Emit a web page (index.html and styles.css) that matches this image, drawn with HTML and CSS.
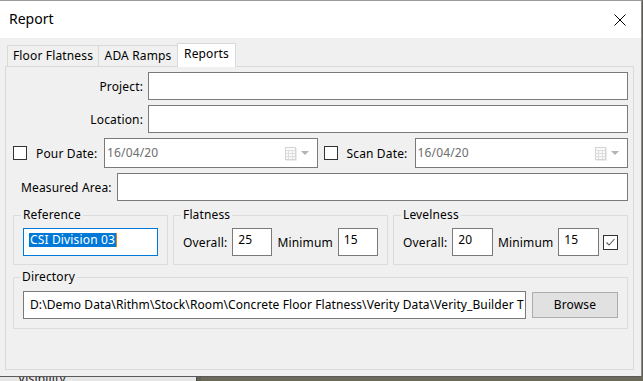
FILE: index.html
```html
<!DOCTYPE html>
<html lang="en">
<head>
    <meta charset="UTF-8">
    <meta name="viewport" content="width=device-width, initial-scale=1.0">
    <title>Report</title>
    <link rel="stylesheet" href="styles.css">
</head>
<body>
    <div class="dialog">
        <div class="titlebar">
            <span class="title">Report</span>
            <svg class="close" width="12" height="12" viewBox="0 0 12 12">
                <path d="M0.5 0.5 L11.5 11.5 M11.5 0.5 L0.5 11.5" stroke="#000" stroke-width="1" fill="none"/>
            </svg>
        </div>

        <div class="dialog-body">
            <div class="tabs">
                <div class="tab tab-flat">Floor Flatness</div>
                <div class="tab tab-ada">ADA Ramps</div>
                <div class="tab tab-reports active">Reports</div>
            </div>

            <div class="tab-page">
                <div class="row">
                    <span class="lbl lbl-right">Project:</span>
                    <div class="textbox grow"></div>
                </div>

                <div class="row">
                    <span class="lbl lbl-right">Location:</span>
                    <div class="textbox grow"></div>
                </div>

                <div class="row row-dates">
                    <div class="date-field">
                        <span class="check"></span>
                        <span class="lbl lbl-date">Pour Date:</span>
                        <div class="datebox">
                            <span class="date-text">16/04/20</span>
                            <svg class="cal" width="13" height="15" viewBox="0 0 13 15">
                                <rect x="1.5" y="1.5" width="10" height="12" fill="#fafafa" stroke="#d4d4d4"/>
                                <path d="M1.5 4.5 H11.5 M1.5 7.5 H11.5 M1.5 10.5 H11.5 M4.5 4.5 V13.5 M8.5 4.5 V13.5" stroke="#dedede" fill="none"/>
                                <path d="M12.5 2 V14.5 H2" stroke="#ececec" fill="none"/>
                            </svg>
                            <svg class="drop" width="8" height="4" viewBox="0 0 8 4">
                                <polygon points="0,0 8,0 4,4" fill="#b4b4b4"/>
                            </svg>
                        </div>
                    </div>
                    <div class="date-field">
                        <span class="check"></span>
                        <span class="lbl lbl-date">Scan Date:</span>
                        <div class="datebox">
                            <span class="date-text">16/04/20</span>
                            <svg class="cal" width="13" height="15" viewBox="0 0 13 15">
                                <rect x="1.5" y="1.5" width="10" height="12" fill="#fafafa" stroke="#d4d4d4"/>
                                <path d="M1.5 4.5 H11.5 M1.5 7.5 H11.5 M1.5 10.5 H11.5 M4.5 4.5 V13.5 M8.5 4.5 V13.5" stroke="#dedede" fill="none"/>
                                <path d="M12.5 2 V14.5 H2" stroke="#ececec" fill="none"/>
                            </svg>
                            <svg class="drop" width="8" height="4" viewBox="0 0 8 4">
                                <polygon points="0,0 8,0 4,4" fill="#b4b4b4"/>
                            </svg>
                        </div>
                    </div>
                </div>

                <div class="row row-area">
                    <span class="lbl">Measured Area:</span>
                    <div class="textbox grow"></div>
                </div>

                <div class="groups">
                    <fieldset class="group group-ref">
                        <legend>Reference</legend>
                        <div class="textbox focused"><span class="selected">CSI Division 03</span><span class="caret"></span></div>
                    </fieldset>
                    <fieldset class="group group-flat">
                        <legend>Flatness</legend>
                        <div class="group-row">
                            <span class="lbl">Overall:</span>
                            <div class="textbox num">25</div>
                            <span class="lbl">Minimum</span>
                            <div class="textbox num">15</div>
                        </div>
                    </fieldset>
                    <fieldset class="group group-level">
                        <legend>Levelness</legend>
                        <div class="group-row">
                            <span class="lbl">Overall:</span>
                            <div class="textbox num">20</div>
                            <span class="lbl">Minimum</span>
                            <div class="textbox num">15</div>
                            <span class="check checked">
                                <svg width="13" height="13" viewBox="0 0 13 13">
                                    <path d="M2.5 6.5 L5 9 L10.5 3" stroke="#5a5a5a" stroke-width="1.1" fill="none"/>
                                </svg>
                            </span>
                        </div>
                    </fieldset>
                </div>

                <fieldset class="group group-dir">
                    <legend>Directory</legend>
                    <div class="group-row">
                        <div class="textbox path">D:\Demo Data\Rithm\Stock\Room\Concrete Floor Flatness\Verity Data\Verity_Builder T</div>
                        <div class="button">Browse</div>
                    </div>
                </fieldset>
            </div>
        </div>
    </div>

    <div class="behind">
        <div class="behind-panel"><span class="behind-text">Visibility</span></div>
        <div class="behind-map"></div>
    </div>
</body>
</html>
```

FILE: styles.css
```css
body, html {
    margin: 0;
    padding: 0;
    height: 100%;
    overflow: hidden;
    background-color: #5f5f55;
    font-family: "Noto Sans", "Open Sans", sans-serif;
    font-size: 12px;
    letter-spacing: 0.15px;
    color: #000;
}

.dialog {
    width: 641px;
    border-top: 1px solid #9a9a9a;
    border-right: 1px solid #8a8a8a;
    border-bottom: 1px solid #5a5a5a;
    background-color: #f0f0f0;
}

.titlebar {
    height: 37px;
    background-color: #fff;
    display: flex;
    align-items: center;
    padding-left: 9px;
}

.title {
    font-size: 14px;
    line-height: 16px;
    margin-top: -2px;
    letter-spacing: 0;
}

.close {
    margin-left: auto;
    margin-right: 15px;
    margin-top: 1px;
}

.dialog-body {
    height: 338px;
    padding-top: 5px;
    box-sizing: border-box;
}

/* tabs */

.tabs {
    display: flex;
    align-items: flex-end;
    height: 23px;
    padding-left: 7px;
}

.tab {
    height: 21px;
    box-sizing: border-box;
    border: 1px solid #d9d9d9;
    border-bottom: none;
    line-height: 20px;
    text-align: center;
    margin-right: -1px;
}

.tab-flat {
    width: 92px;
}

.tab-ada {
    width: 80px;
}

.tab-reports {
    width: 59px;
}

.tab.active {
    height: 24px;
    margin-bottom: -1px;
    background-color: #fff;
    position: relative;
    z-index: 1;
}

.tab-page {
    margin-left: 5px;
    width: 629px;
    height: 304px;
    box-sizing: border-box;
    border: 1px solid #d9d9d9;
    padding: 5px 5px 0 7px;
}

/* rows */

.row {
    display: flex;
    align-items: center;
    gap: 5px;
    margin-bottom: 5px;
}

.lbl {
    white-space: nowrap;
}

.lbl-right {
    width: 130px;
    text-align: right;
}

.textbox {
    height: 28px;
    box-sizing: border-box;
    border: 1px solid #7a7a7a;
    background-color: #fff;
}

.grow {
    flex: 1;
}

.row-dates {
    gap: 6px;
}

.date-field {
    flex: 1;
    display: flex;
    align-items: center;
}

.check {
    width: 14px;
    height: 14px;
    box-sizing: border-box;
    border: 1px solid #333;
    background-color: #fff;
    flex: none;
    margin-right: 9px;
}

.lbl-date {
    width: 68px;
    flex: none;
}

.datebox {
    flex: 1;
    height: 30px;
    box-sizing: border-box;
    border: 1px solid #7a7a7a;
    background-color: #fff;
    display: flex;
    align-items: center;
    padding: 0 8px 0 2px;
}

.date-text {
    color: #6d6d6d;
    margin-top: -1px;
}

.cal {
    margin-left: auto;
    margin-top: 1px;
}

.drop {
    margin-left: 4px;
    margin-top: -1px;
}

.row-area {
    padding-left: 8px;
    margin-bottom: 6px;
}

/* group boxes */

.groups {
    display: flex;
    gap: 5px;
    margin-bottom: 4px;
}

.group {
    margin: 0;
    border: 1px solid #dcdcdc;
    padding: 5px 9px 8px 9px;
    min-width: 0;
}

.group legend {
    padding: 0 2px;
    margin-left: -2px;
    line-height: 16px;
}

.group-ref {
    width: 155px;
    box-sizing: border-box;
}

.group-flat {
    width: 215px;
    box-sizing: border-box;
}

.group-level {
    width: 235px;
    box-sizing: border-box;
}

.group-row {
    display: flex;
    align-items: center;
    gap: 5px;
}

.focused {
    border-color: #0078d7;
    padding: 4px 0 0 5px;
    display: flex;
    align-items: flex-start;
}

.selected {
    background-color: #0078d7;
    color: #fff;
    line-height: 14px;
    padding: 0 1px;
}

.caret {
    width: 1px;
    height: 14px;
    background-color: #e8860c;
}

.num {
    width: 42px;
    padding: 3px 0 0 5px;
    line-height: 16px;
}

.group-level .check {
    margin: 0 0 0 -1px;
    width: 15px;
    height: 15px;
    border-color: #333;
    display: flex;
    align-items: center;
    justify-content: center;
}

.group-dir {
    width: 615px;
    box-sizing: border-box;
    padding: 6px 9px 9px 9px;
}

.group-dir legend {
    margin-left: -3px;
}

.path {
    width: 503px;
    flex: none;
    line-height: 26px;
    padding-left: 6px;
    letter-spacing: 0.1px;
    white-space: nowrap;
    overflow: hidden;
}

.button {
    width: 86px;
    height: 26px;
    box-sizing: border-box;
    border: 1px solid #adadad;
    background-color: #e1e1e1;
    text-align: center;
    line-height: 24px;
    margin-left: 1px;
}

/* window behind the dialog */

.behind {
    display: flex;
    height: 4px;
    overflow: hidden;
}

.behind-panel {
    width: 197px;
    border-right: 1px solid #4a4a4a;
    background-color: #e6e6e6;
    padding-left: 18px;
    box-sizing: border-box;
}

.behind-text {
    display: block;
    margin-top: -5px;
    line-height: 14px;
    color: #222;
}

.behind-map {
    flex: 1;
    margin-left: 4px;
    background-color: #6b6a5a;
}
```
